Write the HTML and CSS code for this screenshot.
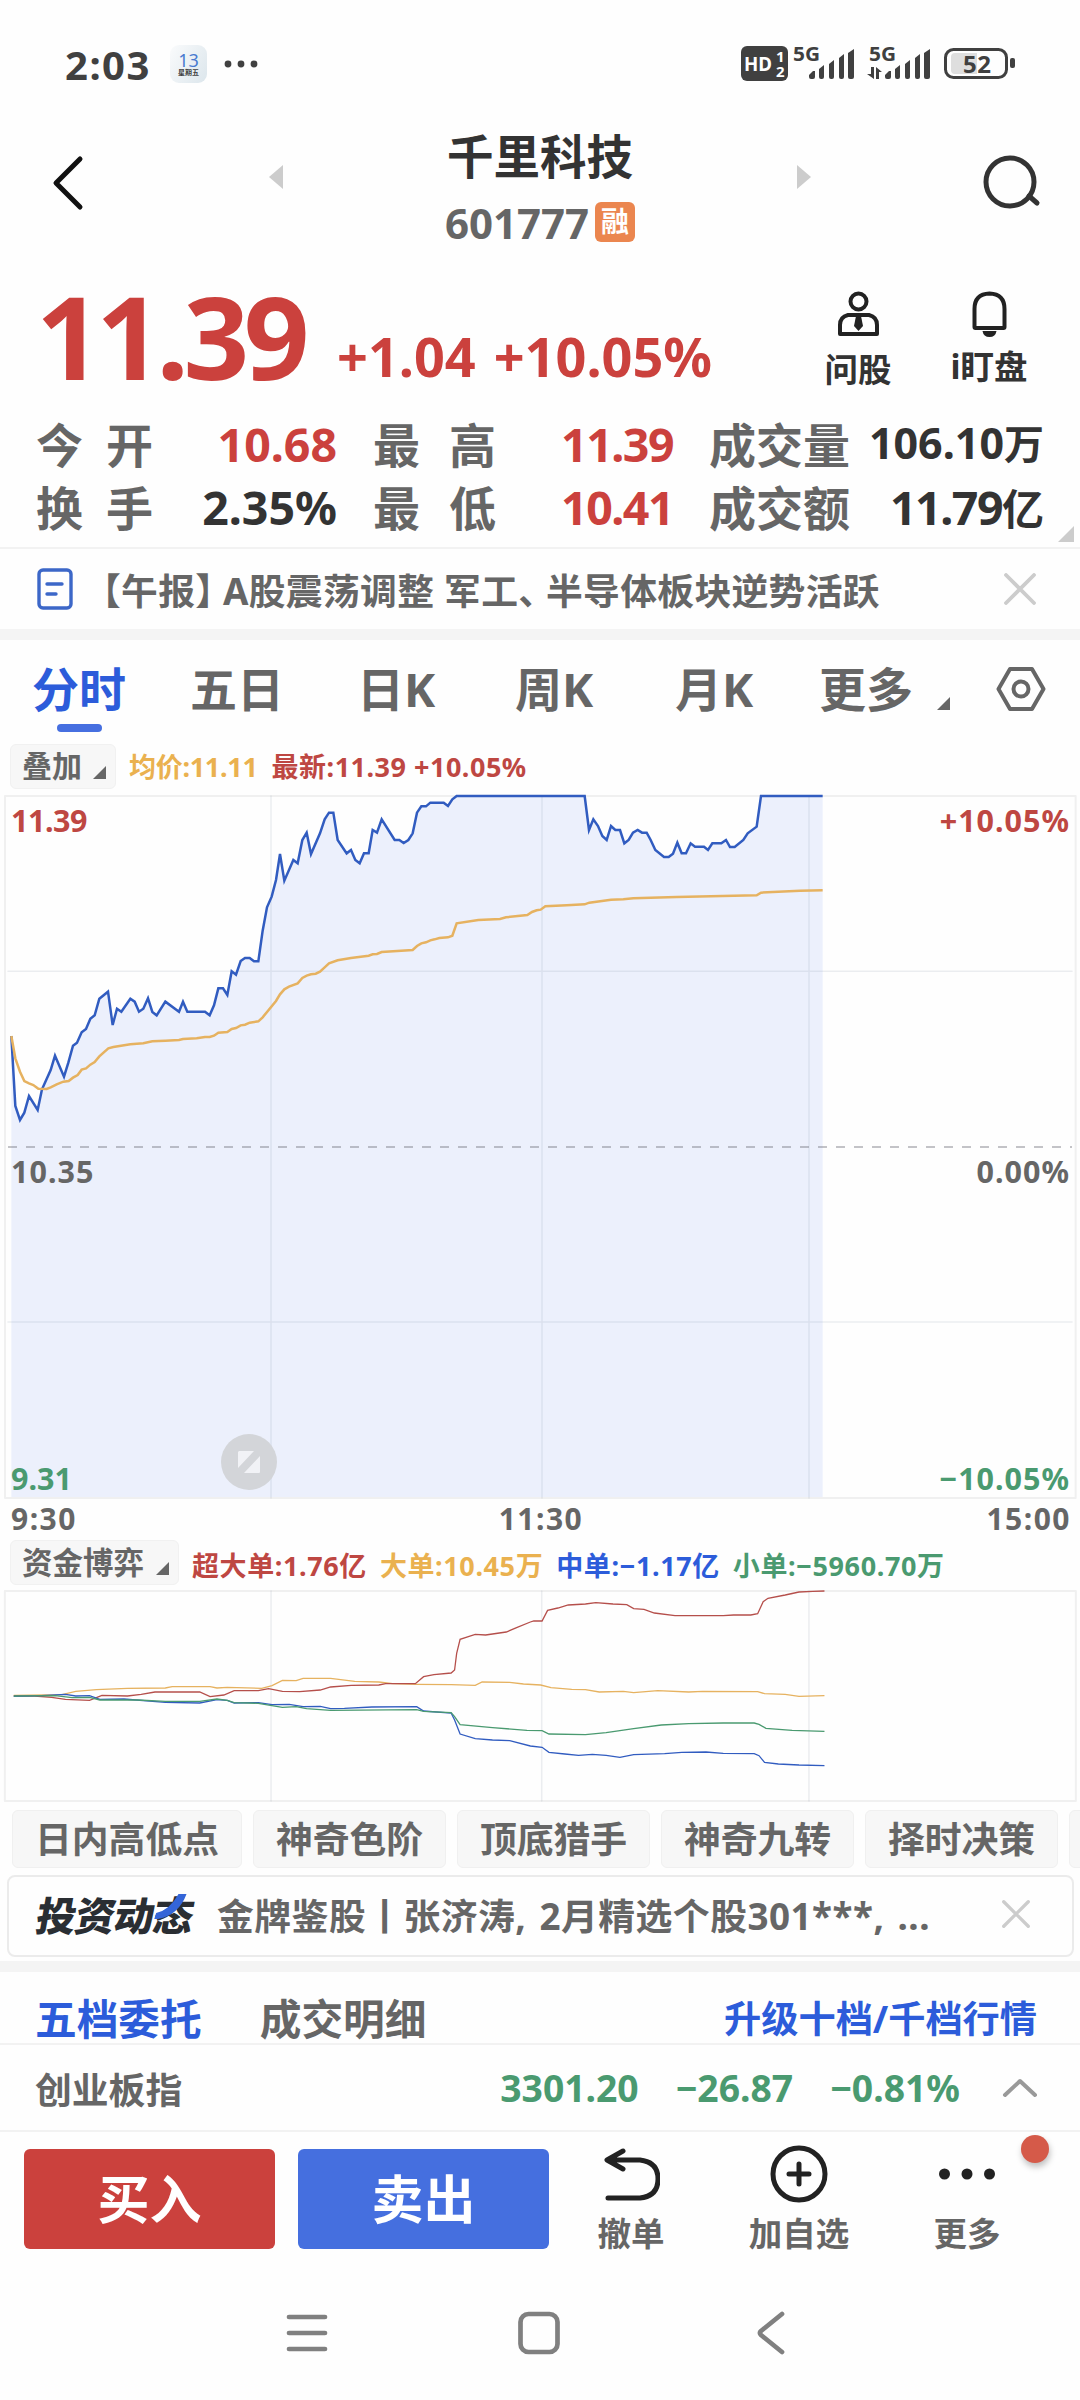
FILE: index.html
```
<!DOCTYPE html>
<html lang="zh-CN">
  <head>
    <meta charset="utf-8" />
    <meta name="viewport" content="width=device-width, initial-scale=1" />
    <title>千里科技 601777</title>
    <link rel="stylesheet" href="styles.css">
  </head>
  <body>
    <div class="status-bar">
      <span class="clock">2:03</span>
      <span class="calendar"><b>13</b><i>星期五</i></span>
      <svg class="dots" width="34" height="8" viewBox="0 0 34 8"><circle cx="4" cy="4" r="3.4"/><circle cx="17" cy="4" r="3.4"/><circle cx="30" cy="4" r="3.4"/></svg>
      <svg class="signals" width="280" height="52" viewBox="738 38 280 52">
        <rect x="741" y="46" width="47" height="35" rx="6"/>
        <g fill="#fff" font-weight="700">
          <text x="744" y="71" font-size="20" textLength="28" lengthAdjust="spacingAndGlyphs">HD</text>
          <text x="776" y="62" font-size="15">1</text>
          <text x="776" y="77" font-size="15">2</text>
        </g>
        <text x="793" y="61" font-size="19" font-weight="700" textLength="27" lengthAdjust="spacingAndGlyphs">5G</text>
        <text x="869" y="61" font-size="19" font-weight="700" textLength="27" lengthAdjust="spacingAndGlyphs">5G</text>
        <g id="bars">
          <path d="M809 77v-2l4-4h2v6q0 2-2 2h-2q-2 0-2-2zM819 69l5-4v12q0 2-2 2h-1q-2 0-2-2zM829 64l5-4v17q0 2-2 2h-1q-2 0-2-2zM839 58l5-4v23q0 2-2 2h-1q-2 0-2-2zM848 53l6-4v28q0 2-2 2h-2q-2 0-2-2z"/>
        </g>
        <use href="#bars" x="76"/>
        <path d="M871 67h3v12l-7-5h4zM876 79v-12l6 5h-3v7z"/>
        <rect x="945.5" y="49.500" width="61" height="28" rx="8" fill="none" stroke="#404040" stroke-width="3"/>
        <path d="M955 53h22v21h-22q-4 0-4-4v-13q0-4 4-4z" fill="#dedede"/>
        <rect x="1010" y="58" width="5" height="10" rx="2"/>
        <text x="963" y="73" font-size="24" font-weight="700" textLength="28">52</text>
      </svg>
    </div>

    <header class="top">
      <svg class="back" width="34" height="60" viewBox="0 0 34 60"><path d="M29 6 5 30 29 54"/></svg>
      <svg class="prev" width="14" height="24" viewBox="0 0 14 24"><path d="M14 0v24L0 12z"/></svg>
      <div class="stock">
        <h1>千里科技</h1>
        <p><span>601777</span><em>融</em></p>
      </div>
      <svg class="next" width="14" height="24" viewBox="0 0 14 24"><path d="M0 0v24L14 12z"/></svg>
      <svg class="search" width="60" height="56" viewBox="0 0 60 56"><circle cx="28" cy="28" r="24"/><path d="M47 42l8 7"/></svg>
    </header>

    <section class="quote">
      <strong class="price">11.39</strong>
      <span class="change"><span>+1.04</span><span>+10.05%</span></span>
      <a class="tool">
        <svg width="45" height="46" viewBox="0 0 45 46"><circle cx="22.500" cy="10.500" r="8"/><path d="M12 24h21q8 2 8 10v9H4v-9q0-8 8-10z"/><path class="solid" d="M20 25h5l2 10-4.500 5-4.500-5z"/></svg>
        <span>问股</span>
      </a>
      <a class="tool bell">
        <svg width="45" height="46" viewBox="0 0 45 46"><path d="M7.500 36V18q0-15 15-15.500Q37.500 3 37.500 18v18q0 1-1 1h-28q-1 0-1-1z"/><path class="solid" d="M15.500 40h14q-1 6-7 6t-7-6z"/></svg>
        <span>i盯盘</span>
      </a>
    </section>

    <section class="figures">
      <dl><dt>今<span>开</span></dt><dd class="red">10.68</dd></dl>
      <dl><dt>最<span>高</span></dt><dd class="red tight">11.39</dd></dl>
      <dl><dt>成交量</dt><dd class="small">106.10<i>万</i></dd></dl>
      <dl><dt>换<span>手</span></dt><dd>2.35%</dd></dl>
      <dl><dt>最<span>低</span></dt><dd class="red tight">10.41</dd></dl>
      <dl><dt>成交额</dt><dd class="tight">11.79<i>亿</i></dd></dl>
      <b class="corner"></b>
    </section>

    <section class="news">
      <svg width="36" height="42" viewBox="0 0 36 42"><rect x="2" y="2" width="32" height="38" rx="4"/><path d="M10 16h15M10 26h9"/></svg>
      <p>【午报<span class="half">】</span>A股震荡调整 军工<span class="half">、</span>半导体板块逆势活跃</p>
      <svg class="close" width="32" height="32" viewBox="0 0 32 32"><path d="M2 2l28 28M30 2 2 30"/></svg>
    </section>

    <nav class="periods">
      <a class="active">分时</a>
      <a>五日</a>
      <a>日K</a>
      <a>周K</a>
      <a>月K</a>
      <a>更多</a>
      <b class="tri"></b>
      <svg width="50" height="46" viewBox="0 0 50 46"><path d="M14 3h22l11.500 20L36 43H14L2.500 23z"/><circle cx="25" cy="23" r="7.500"/></svg>
    </nav>

    <div class="legend">
      <button>叠加<b class="tri"></b></button>
      <span class="yellow avg">均价:11.11</span>
      <span class="red last">最新:11.39 +10.05%</span>
    </div>

    <section class="chart">
      <svg width="1080" height="707" viewBox="0 39 3240 2121">
        <path class="area" d="M34,2154 L34,768 46,978 60,1020 73,998 87,948 113,990 126,928 152,870 165,827 192,890 205,848 219,797 231,788 245,757 258,747 271,716 284,706 298,656 324,635 338,735 351,686 364,695 391,656 404,665 417,695 430,686 444,655 457,696 470,706 496,665 537,695 549,665 562,695 615,695 629,706 642,676 655,625 669,625 682,645 695,574 708,584 722,543 735,534 749,534 762,544 775,544 788,452 801,382 815,350 828,300 840,222 853,302 880,240 893,250 907,180 920,158 933,222 960,160 974,118 987,98 1000,98 1013,180 1040,220 1053,210 1066,240 1079,250 1092,220 1106,220 1118,150 1131,158 1145,118 1184,180 1198,180 1211,189 1225,180 1238,160 1251,98 1264,79 1278,79 1291,68 1331,68 1344,78 1357,58 1370,48 1754,48 1767,150 1780,118 1794,138 1807,168 1820,180 1833,138 1846,150 1860,150 1873,190 1886,180 1899,158 1913,150 1926,158 1940,158 1952,180 1966,210 1992,231 2006,231 2019,221 2032,188 2045,220 2058,220 2072,190 2085,200 2112,200 2124,210 2137,190 2164,190 2178,180 2190,201 2204,201 2230,180 2243,160 2270,140 2283,48 2468,48 2468,2154z"/>
        <path class="frame" d="M15,48H3227V2154H15z"/>
        <path class="grid" d="M813,48V2154M1626,48V2154M2427,48V2154M24,574H3216M24,1626H3216"/>
        <path class="zero" d="M24,1101H3216"/>
        <polyline class="line blue" points="34,768 46,978 60,1020 73,998 87,948 113,990 126,928 152,870 165,827 192,890 205,848 219,797 231,788 245,757 258,747 271,716 284,706 298,656 324,635 338,735 351,686 364,695 391,656 404,665 417,695 430,686 444,655 457,696 470,706 496,665 537,695 549,665 562,695 615,695 629,706 642,676 655,625 669,625 682,645 695,574 708,584 722,543 735,534 749,534 762,544 775,544 788,452 801,382 815,350 828,300 840,222 853,302 880,240 893,250 907,180 920,158 933,222 960,160 974,118 987,98 1000,98 1013,180 1040,220 1053,210 1066,240 1079,250 1092,220 1106,220 1118,150 1131,158 1145,118 1184,180 1198,180 1211,189 1225,180 1238,160 1251,98 1264,79 1278,79 1291,68 1331,68 1344,78 1357,58 1370,48 1754,48 1767,150 1780,118 1794,138 1807,168 1820,180 1833,138 1846,150 1860,150 1873,190 1886,180 1899,158 1913,150 1926,158 1940,158 1952,180 1966,210 1992,231 2006,231 2019,221 2032,188 2045,220 2058,220 2072,190 2085,200 2112,200 2124,210 2137,190 2164,190 2178,180 2190,201 2204,201 2230,180 2243,160 2270,140 2283,48 2468,48"/>
        <polyline class="line yellow" points="34,768 46,835 60,875 73,903 87,910 100,915 115,926 140,927 152,922 170,913 190,905 206,903 219,893 233,885 245,869 258,865 271,854 284,846 298,829 325,805 340,801 391,793 430,790 457,784 496,782 537,780 549,777 590,775 615,771 629,771 642,767 655,758 682,756 695,747 708,744 722,736 735,734 749,728 775,724 788,712 828,663 840,643 853,628 867,620 893,610 907,594 920,587 933,583 947,581 960,575 974,562 987,550 1013,541 1053,534 1106,527 1118,523 1131,522 1145,516 1238,510 1251,498 1264,490 1278,487 1291,481 1304,478 1318,474 1344,472 1357,467 1370,430 1435,420 1500,417 1518,412 1582,405 1596,396 1610,391 1622,389 1636,379 1700,376 1754,373 1768,368 1833,359 1870,358 1900,355 2030,351 2270,346 2283,338 2400,332 2468,331"/>
      </svg>
      <span class="axis high left red">11.39</span>
      <span class="axis high right red">+10.05%</span>
      <span class="axis mid left">10.35</span>
      <span class="axis mid right">0.00%</span>
      <span class="axis low left green">9.31</span>
      <span class="axis low right green">−10.05%</span>
      <svg class="expand" width="56" height="56" viewBox="0 0 56 56"><circle cx="28" cy="28" r="28"/><path d="M18 17h15L17 34V18zM39 22v16q0 1-1 1H23z"/></svg>
    </section>
    <div class="times"><span>9:30</span><span>11:30</span><span>15:00</span></div>

    <div class="legend funds">
      <button>资金博弈<b class="tri"></b></button>
      <span class="red">超大单:1.76亿</span>
      <span class="yellow">大单:10.45万</span>
      <span class="blue">中单:−1.17亿</span>
      <span class="green">小单:−5960.70万</span>
    </div>
    <section class="fund-chart">
      <svg width="1080" height="215" viewBox="0 174 1568 645" preserveAspectRatio="none">
        <path class="frame" d="M7,183H1562V813H7z"/>
        <path class="grid" d="M393.500,183V813M786.500,183V813M1174.500,183V813"/>
        <polyline class="line yellow" points="20,496 90,494 110,484 140,479 185,475 240,474 250,470 305,470 315,474 330,472 380,475 395,467 410,451 430,452 440,445 480,445 515,454 550,456 570,461 605,463 655,464 690,466 700,456 740,457 760,462 785,465 800,473 830,478 850,479 870,486 905,484 920,488 955,482 1000,486 1020,484 1100,485 1110,491 1140,493 1160,499 1197,497"/>
        <polyline class="line red" points="20,498 50,498 75,502 95,508 130,511 148,496 185,498 205,493 225,486 290,486 305,500 325,495 340,482 375,482 390,476 410,484 435,485 465,480 480,471 510,466 550,465 560,461 603,461 615,440 630,434 655,429 660,420 663,370 668,328 680,320 690,313 705,315 735,306 750,293 770,276 775,273 787,273 795,241 810,234 825,225 850,222 865,218 890,222 910,224 920,236 935,238 950,249 980,257 1050,257 1065,255 1090,255 1100,251 1108,215 1115,205 1140,195 1160,186 1180,184 1197,183"/>
        <polyline class="line blue" points="20,499 60,497 95,493 110,498 130,497 145,508 180,507 240,517 290,519 315,509 330,511 340,519 375,518 395,524 420,523 440,530 465,529 480,536 500,535 540,531 605,530 615,543 655,549 660,570 668,612 690,626 715,630 740,632 770,648 787,652 797,667 820,672 840,676 860,673 880,676 900,682 920,674 965,671 990,667 1025,666 1050,670 1095,671 1102,677 1110,697 1130,702 1160,705 1197,707"/>
        <polyline class="line green" points="20,498 80,497 105,503 130,502 145,510 200,510 240,514 290,514 315,507 330,511 340,518 375,520 410,532 430,530 445,536 480,541 605,539 615,544 655,548 660,560 668,584 715,593 765,601 787,602 797,612 850,614 880,608 920,596 960,585 1000,581 1050,579 1095,579 1102,583 1112,595 1150,601 1197,604"/>
      </svg>
    </section>

    <div class="chips">
      <a class="wide">日内高低点</a>
      <a>神奇色阶</a>
      <a>顶底猎手</a>
      <a>神奇九转</a>
      <a>择时决策</a>
      <a></a>
    </div>

    <section class="promo">
      <strong>投资动态<svg width="30" height="26" viewBox="0 0 30 26"><path d="M20 0h8Q24 21 4 25H0l1-6Q14 16 20 0z"/></svg></strong>
      <p>金牌鉴股丨张济涛, 2月精选个股301***, ...</p>
      <svg class="close" width="28" height="28" viewBox="0 0 32 32"><path d="M2 2l28 28M30 2 2 30"/></svg>
    </section>

    <nav class="book">
      <a class="active">五档委托</a>
      <a>成交明细</a>
      <a class="upgrade">升级十档/千档行情</a>
    </nav>
    <section class="index-row">
      <span class="name">创业板指</span>
      <span class="num">3301.20</span>
      <span class="num">−26.87</span>
      <span class="num">−0.81%</span>
      <svg width="36" height="20" viewBox="0 0 36 20"><path d="M3 17 18 3l15 14"/></svg>
    </section>

    <footer class="actions">
      <button class="buy">买入</button>
      <button class="sell">卖出</button>
      <a>
        <svg width="58" height="58" viewBox="0 0 58 58"><path d="M21 6 5 15l16 9M6 15h32q18 2 18 19t-18 19H6"/></svg>
        撤单
      </a>
      <a>
        <svg width="58" height="58" viewBox="0 0 58 58"><circle cx="29" cy="29" r="26"/><path d="M29 19v20M19 29h20"/></svg>
        加自选
      </a>
      <a>
        <svg width="58" height="58" viewBox="0 0 58 58"><g class="solid"><circle cx="6.500" cy="29" r="5.500"/><circle cx="29" cy="29" r="5.500"/><circle cx="51.500" cy="29" r="5.500"/></g></svg>
        更多
        <i class="badge"></i>
      </a>
    </footer>

    <div class="system-nav">
      <svg width="42" height="44" viewBox="0 0 42 44"><path d="M3 6h36M3 22h36M3 38h36"/></svg>
      <svg width="42" height="44" viewBox="0 0 42 44"><rect x="2.500" y="3" width="37" height="38" rx="8"/></svg>
      <svg width="42" height="44" viewBox="0 0 42 44"><path d="M32 3 11 20q-2 2 0 4l21 17"/></svg>
    </div>
  </body>
</html>
```
FILE: styles.css
```
* {
  box-sizing: border-box;
}

body {
  margin: 0;
  width: 1080px;
  height: 2400px;
  overflow: hidden;
  background: #fefefe;
  color: #666;
  font-family: 'Noto Sans', 'Noto Sans CJK SC', sans-serif;
  font-weight: 700;
  white-space: nowrap;
  --red: #cb413d;
  --blue: #2c5cda;
  --green: #4a9a70;
  --yellow: #eab14f;
}

h1, p, dl, dd {
  margin: 0;
}

i, em {
  font-style: normal;
}

svg {
  display: block;
  flex: none;
  fill: none;
  stroke-linecap: round;
  stroke-linejoin: round;
}

button {
  border: 0;
  font: inherit;
  color: inherit;
}

.red { color: var(--red); }
.green { color: var(--green); }
.yellow { color: var(--yellow); }
.blue { color: var(--blue); }

.tri {
  width: 13px;
  height: 13px;
  background: #666;
  clip-path: polygon(100% 0, 100% 100%, 0 100%);
}

.close {
  stroke: #ccc;
  stroke-width: 3.8;
}

/* status bar */
.status-bar {
  display: flex;
  align-items: center;
  height: 128px;
  padding: 0 62px 0 65px;
  color: #404040;
}

.clock {
  width: 105px;
  font-size: 40px;
  letter-spacing: 1.5px;
}

.calendar {
  width: 37px;
  height: 38px;
  border-radius: 9px;
  background: linear-gradient(120deg, #fafbfc, #dce6ec);
  text-align: center;
  line-height: 1;
}

.calendar b {
  display: block;
  padding-top: 6px;
  font-size: 18px;
  font-weight: 400;
  color: #4a7bd0;
}

.calendar i {
  display: block;
  font-size: 7px;
}

.dots {
  margin-left: 17px;
  fill: #404040;
}

.signals {
  margin-left: auto;
  fill: #404040;
}

/* title bar */
.top {
  display: flex;
  align-items: flex-start;
  height: 140px;
}

.back {
  margin: 25px 0 0 51px;
  stroke: #111;
  stroke-width: 5;
}

.prev,
.next {
  margin-top: 37px;
  fill: #ccc;
}

.prev {
  margin-left: 184px;
}

.stock {
  width: 514px;
  text-align: center;
}

.stock h1 {
  height: 59px;
  line-height: 56px;
  font-size: 46.5px;
  color: #333;
}

.stock p {
  display: flex;
  justify-content: center;
  align-items: center;
  gap: 6px;
  height: 70px;
  font-size: 42px;
}

.stock em {
  width: 40px;
  height: 40px;
  border-radius: 6px;
  background: #eb864f;
  color: #fff;
  font-size: 28px;
  line-height: 38px;
}

.search {
  margin: 26px 0 0 171px;
  stroke: #333;
  stroke-width: 5;
}

/* price */
.quote {
  display: flex;
  height: 150px;
  color: var(--red);
}

.price {
  width: 301px;
  margin-left: 36px;
  font-size: 115px;
  font-weight: 700;
  line-height: 136px;
  letter-spacing: -5.5px;
}

.change {
  display: flex;
  gap: 18px;
  margin-top: 53px;
  height: 70px;
  width: 475px;
  font-size: 54px;
  line-height: 70px;
}

.tool {
  display: flex;
  flex-direction: column;
  align-items: center;
  width: 92px;
  margin-top: 23px;
  font-size: 33.5px;
  line-height: 46px;
  gap: 9px;
  color: #333;
}

.tool svg {
  stroke: #222;
  stroke-width: 4;
}

.tool .solid {
  fill: #222;
  stroke: none;
}

.bell {
  margin-left: 39px;
}

.bell span {
  margin-top: -3px;
}

/* open, high, low, turnover */
.figures {
  position: relative;
  display: grid;
  grid-template-columns: 301px 300px 335px;
  column-gap: 36px;
  grid-template-rows: 63px 63px;
  height: 131px;
  padding-left: 36px;
  border-bottom: 2px solid #f2f2f2;
}

.figures dl {
  display: flex;
  justify-content: space-between;
  line-height: 54px;
}

.figures dt {
  font-size: 47px;
}

.figures dt span {
  margin-left: 23px;
}

.figures dl:nth-child(3n + 2) dt span {
  margin-left: 29px;
}

.figures dd {
  margin-top: -1px;
  color: #333;
  font-size: 46.5px;
}

.figures dd.red {
  color: var(--red);
}

.figures .tight {
  letter-spacing: -1.5px;
}

.figures dd i {
  font-size: 42px;
  letter-spacing: 0;
}

.figures .small {
  margin-top: -2px;
  font-size: 43px;
}

.figures .small i {
  font-size: 40px;
}

.corner {
  position: absolute;
  right: 6px;
  bottom: 5px;
  width: 16px;
  height: 16px;
  background: #ccc;
  clip-path: polygon(100% 0, 100% 100%, 0 100%);
}

/* news strip */
.news {
  display: flex;
  align-items: center;
  height: 91px;
  padding: 0 44px 0 37px;
  border-bottom: 11px solid #f4f4f4;
}

.news svg:first-child {
  stroke: #3c67c8;
  stroke-width: 3.4;
}

.news p {
  margin-left: 11px;
  font-size: 36.8px;
  letter-spacing: 0.3px;
}

.half {
  margin-right: 9px;
  font-feature-settings: 'halt';
}

.news .close {
  margin-left: auto;
}

/* chart period tabs */
.periods {
  display: flex;
  height: 104px;
  font-size: 47px;
  line-height: 98px;
}

.periods a {
  width: 160px;
  padding-left: 30px;
}

.periods a:nth-child(1) { width: 159px; padding-left: 32px; }
.periods a:nth-child(2) { width: 171px; padding-left: 31px; }
.periods a:nth-child(3) { width: 155px; padding-left: 27px; }
.periods a:nth-child(5) { width: 174px; }
.periods a:nth-child(6) { width: 118px; padding-left: 0; }

.periods .active {
  position: relative;
  color: var(--blue);
}

.periods .active::after {
  content: '';
  position: absolute;
  left: 57px;
  bottom: 12px;
  width: 45px;
  height: 8px;
  border-radius: 4px;
  background: #466fe0;
}

.periods .tri {
  margin-top: 57px;
}

.periods svg {
  margin: 26px 0 0 46px;
  stroke: #666;
  stroke-width: 4;
}

/* legends above both charts */
.legend {
  --red: #be4742;
  display: flex;
  height: 49px;
  padding-left: 10px;
  font-size: 27px;
  line-height: 46px;
}

.legend button {
  display: flex;
  height: 45px;
  padding: 0 9px 0 11px;
  border: 1px solid #f1f1f1;
  border-radius: 6px;
  background: #f7f7f7;
  font-size: 30px;
  line-height: 42px;
}

.legend button .tri {
  margin: 21px 0 0 11px;
}

.legend span {
  margin-left: 13px;
}

.legend .avg {
  letter-spacing: -0.3px;
}

.legend .last {
  margin-left: 14px;
  letter-spacing: 0.5px;
}

/* charts */
.chart {
  --red: #be4742;
  position: relative;
  height: 707px;
}

.frame {
  stroke: #f0f0f0;
  stroke-width: 2;
  vector-effect: non-scaling-stroke;
}

.grid {
  stroke: rgba(110, 120, 150, 0.13);
  stroke-width: 1.5;
  vector-effect: non-scaling-stroke;
}

.zero {
  stroke: rgba(100, 100, 110, 0.38);
  stroke-width: 6;
  stroke-dasharray: 27 27;
  stroke-linecap: butt;
}

.area {
  fill: #ecf0fc;
}

.line {
  stroke: currentColor;
  stroke-width: 2.5;
  stroke-linejoin: miter;
  stroke-linecap: butt;
  vector-effect: non-scaling-stroke;
}

.line.blue {
  color: #315cc0;
}

.line.yellow {
  color: #e6b260;
}

.axis {
  position: absolute;
  font-size: 30.5px;
  line-height: 40px;
}

.left { left: 11px; }
.right { right: 10px; letter-spacing: 1px; }
.high { top: 7px; }
.mid { top: 358px; letter-spacing: 1px; }
.low { top: 665px; }

.high.left {
  letter-spacing: -0.5px;
}

.expand {
  position: absolute;
  left: 221px;
  top: 641px;
}

.expand circle {
  fill: #d3d5d9;
}

.expand path {
  fill: #f1f2f6;
}

.times {
  display: grid;
  grid-template-columns: 1fr 1fr 1fr;
  height: 40px;
  padding: 0 9px 0 11px;
  font-size: 30px;
  line-height: 38px;
  letter-spacing: 1.5px;
}

.times span:nth-child(2) {
  text-align: center;
}

.times span:nth-child(3) {
  text-align: right;
}

.funds {
  height: 48px;
  line-height: 51px;
  letter-spacing: 0.6px;
}

.funds button {
  font-size: 30.5px;
  line-height: 43px;
  letter-spacing: 0;
}

.funds button .tri {
  margin-left: 12px;
}

.fund-chart .line {
  stroke-width: 1.3;
}

.fund-chart .red {
  color: #b54f4b;
}

/* shortcut chips */
.chips {
  display: flex;
  gap: 11px;
  height: 72px;
  padding: 7px 0 0 12px;
  overflow: hidden;
}

.chips a {
  flex: none;
  width: 193px;
  height: 58px;
  border: 1px solid #f0f0f0;
  border-radius: 6px;
  background: #f7f7f7;
  text-align: center;
  font-size: 36.8px;
  line-height: 56px;
}

.chips .wide {
  width: 230px;
}

.promo {
  display: flex;
  align-items: center;
  height: 82px;
  margin: 0 6px 4px 7px;
  padding: 0 42px 4px 28px;
  border: 2px solid #ebebeb;
  border-radius: 8px;
  font-size: 36.8px;
}

.promo strong {
  position: relative;
  width: 180px;
  color: #2a2e33;
  font-size: 40px;
  letter-spacing: -1px;
  transform: skewX(-10deg);
}

.promo strong svg {
  position: absolute;
  left: 118px;
  top: 9px;
  fill: #3465d8;
}

.promo p {
  letter-spacing: 0.5px;
  word-spacing: 3px;
}

.promo .close {
  margin-left: auto;
}

/* order book */
.book {
  display: flex;
  height: 84px;
  padding: 9px 43px 0 35px;
  border-top: 11px solid #f4f4f4;
  border-bottom: 2px solid #f2f2f2;
  font-size: 41.7px;
  line-height: 76px;
}

.book a {
  margin-right: 58px;
}

.book .active {
  color: var(--blue);
}

.book .upgrade {
  margin: 0 0 0 auto;
  color: var(--blue);
  font-size: 37.2px;
}

.index-row {
  display: flex;
  align-items: center;
  height: 87px;
  padding: 0 42px 0 35px;
  border-bottom: 2px solid #f2f2f2;
  font-size: 36.8px;
}

.index-row .name {
  margin-right: auto;
}

.index-row .num {
  margin-right: 37px;
  color: var(--green);
  font-size: 37.3px;
}

.index-row svg {
  margin-left: 5px;
  stroke: #999;
  stroke-width: 4;
}

/* bottom bar */
.actions {
  display: flex;
  height: 139px;
  padding: 17px 0 0 24px;
}

.actions button {
  width: 251px;
  height: 100px;
  margin-right: 23px;
  border-radius: 6px;
  color: #fff;
  font-size: 52px;
  line-height: 98px;
}

.buy { background: #cb413d; }
.sell { background: #456fdf; }

.actions a {
  position: relative;
  display: flex;
  flex-direction: column;
  align-items: center;
  width: 168px;
  margin-top: -4px;
  font-size: 33.5px;
  line-height: 46px;
  gap: 7px;
}

.actions button + a {
  margin-left: -25px;
}

.actions svg {
  stroke: #222;
  stroke-width: 5;
}

.actions .solid {
  fill: #222;
  stroke: none;
}

.badge {
  position: absolute;
  right: 2px;
  top: -10px;
  width: 28px;
  height: 28px;
  border-radius: 50%;
  background: #d55a49;
  box-shadow: 1px 4px 6px rgba(0, 0, 0, 0.25);
}

.system-nav {
  display: flex;
  justify-content: space-between;
  padding: 40px 288px 0 286px;
}

.system-nav svg {
  stroke: #808080;
  stroke-width: 4.7;
}
```
